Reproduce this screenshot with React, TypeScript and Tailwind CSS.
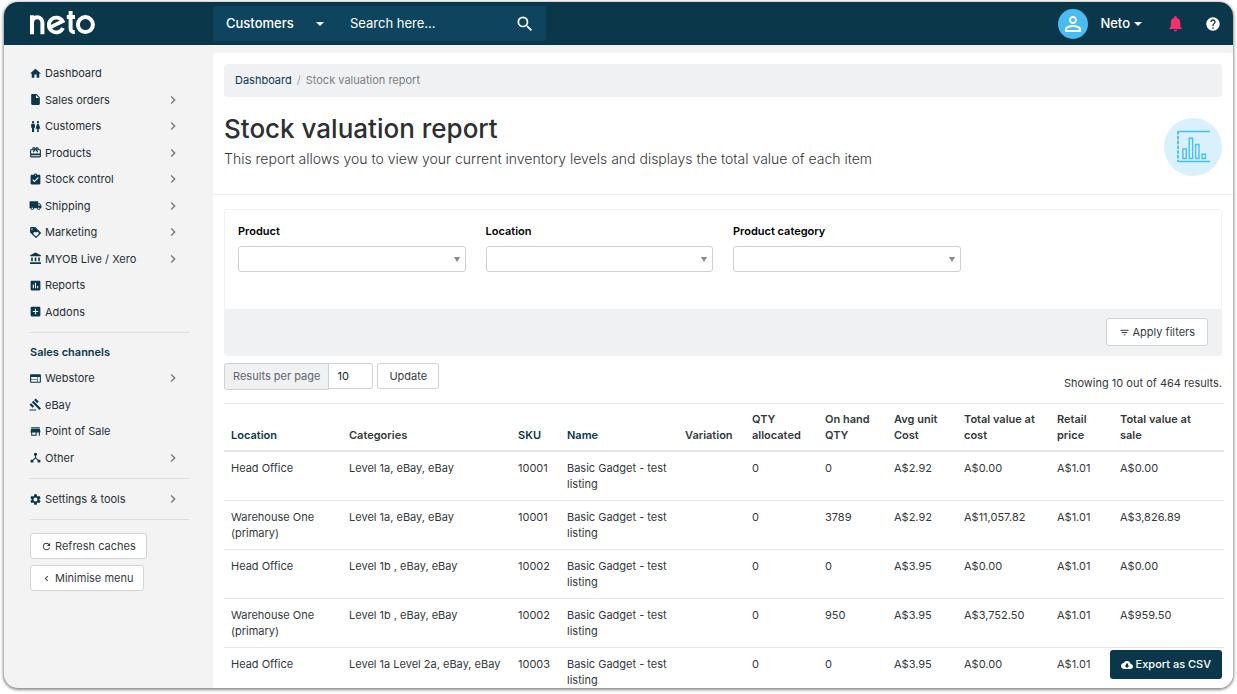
import { useState } from "react";
import type { ReactNode } from "react";
import type { IconType } from "react-icons";
import {
    MdAccountBalance,
    MdAddBox,
    MdAssessment,
    MdAssignmentTurnedIn,
    MdCardGiftcard,
    MdChevronLeft,
    MdChevronRight,
    MdCloudDownload,
    MdDeviceHub,
    MdFilterList,
    MdGavel,
    MdHelp,
    MdHome,
    MdInsertDriveFile,
    MdLocalShipping,
    MdLoyalty,
    MdNotifications,
    MdPersonOutline,
    MdRefresh,
    MdSearch,
    MdSettings,
    MdStore,
    MdWc,
    MdWeb,
} from "react-icons/md";

type NavItem = { label: string; icon: IconType; more?: boolean };

const mainNav: NavItem[] = [
    { label: "Dashboard", icon: MdHome },
    { label: "Sales orders", icon: MdInsertDriveFile, more: true },
    { label: "Customers", icon: MdWc, more: true },
    { label: "Products", icon: MdCardGiftcard, more: true },
    { label: "Stock control", icon: MdAssignmentTurnedIn, more: true },
    { label: "Shipping", icon: MdLocalShipping, more: true },
    { label: "Marketing", icon: MdLoyalty, more: true },
    { label: "MYOB Live / Xero", icon: MdAccountBalance, more: true },
    { label: "Reports", icon: MdAssessment },
    { label: "Addons", icon: MdAddBox },
];

const channelNav: NavItem[] = [
    { label: "Webstore", icon: MdWeb, more: true },
    { label: "eBay", icon: MdGavel },
    { label: "Point of Sale", icon: MdStore },
    { label: "Other", icon: MdDeviceHub, more: true },
];

const columns = [
    { label: "Location", width: "w-[118px]", sortable: true },
    { label: "Categories", width: "w-[169px]" },
    { label: "SKU", width: "w-[49px]", sortable: true },
    { label: "Name", width: "w-[118px]", sortable: true },
    { label: "Variation", width: "w-[67px]" },
    { label: "QTY allocated", width: "w-[73px]" },
    { label: "On hand QTY", width: "w-[69px]" },
    { label: "Avg unit Cost", width: "w-[70px]" },
    { label: "Total value at cost", width: "w-[93px]" },
    { label: "Retail price", width: "w-[63px]" },
    { label: "Total value at sale", width: "w-[111px]" },
];

const name = "Basic Gadget - test listing";

const rows = [
    ["Head Office", "Level 1a, eBay, eBay", "10001", name, "", "0", "0", "A$2.92", "A$0.00", "A$1.01", "A$0.00"],
    ["Warehouse One (primary)", "Level 1a, eBay, eBay", "10001", name, "", "0", "3789", "A$2.92", "A$11,057.82", "A$1.01", "A$3,826.89"],
    ["Head Office", "Level 1b , eBay, eBay", "10002", name, "", "0", "0", "A$3.95", "A$0.00", "A$1.01", "A$0.00"],
    ["Warehouse One (primary)", "Level 1b , eBay, eBay", "10002", name, "", "0", "950", "A$3.95", "A$3,752.50", "A$1.01", "A$959.50"],
    ["Head Office", "Level 1a Level 2a, eBay, eBay", "10003", name, "", "0", "0", "A$3.95", "A$0.00", "A$1.01", ""],
];

function NavLink({ item }: { item: NavItem }) {
    const Icon = item.icon;
    return (
        <a href="#" className="flex items-center gap-[3px] pr-2 text-[#1f2f38]">
            <Icon className="size-[13px] -ml-px text-[#0b374b]" />
            <span className="flex-1">{item.label}</span>
            {item.more && <MdChevronRight className="size-4 text-[#777]" />}
        </a>
    );
}

function OutlineButton({ className, children }: { className: string; children: ReactNode }) {
    return (
        <button className={`flex items-center rounded-[3px] border border-[#d2d3d4] bg-white text-[#343a40] ${className}`}>
            {children}
        </button>
    );
}

function Logo() {
    return (
        <svg viewBox="0 0 66 26" className="h-[26px] w-[66px]" fill="none" stroke="#fff" strokeWidth="4">
            <path d="M3 23.2V4.2M3 12a5.2 5.8 0 0 1 10.4 0V23.2" />
            <path d="M20.6 16.6 33.6 10.2A7.4 7.4 0 1 0 34 17" strokeWidth="3.8" />
            <path d="M41.6 0V17.5c0 2.6 1.4 3.8 4.2 3.6M37.8 6H46" />
            <circle cx="56.4" cy="13.6" r="7.5" />
        </svg>
    );
}

function TopBar() {
    return (
        <header className="flex h-[43px] shrink-0 items-center bg-[#0b374b] text-[13px] font-medium text-white">
            <a href="#" aria-label="neto" className="w-[209px] pl-[25px]">
                <Logo />
            </a>
            <form className="flex h-[35px] w-[333px] items-center rounded-[3px] bg-[#0f445e] pr-[11px]">
                <button type="button" className="flex w-[137px] items-center gap-[22px] pl-[13px]">
                    Customers
                    <span className="border-x-4 border-t-4 border-x-transparent border-t-white" />
                </button>
                <input
                    aria-label="Search"
                    placeholder="Search here..."
                    className="min-w-0 flex-1 font-normal outline-none placeholder:text-white"
                />
                <button type="button" aria-label="Search">
                    <MdSearch className="size-5" />
                </button>
            </form>
            <div className="ml-auto flex items-center pr-3">
                <span className="mr-3 flex size-[30px] items-center justify-center rounded-full bg-[#49bdf2]">
                    <MdPersonOutline className="size-6" />
                </span>
                <button className="mr-6 flex items-center gap-1">
                    Neto
                    <span className="border-x-4 border-t-4 border-x-transparent border-t-white" />
                </button>
                <button aria-label="Notifications" className="mr-5">
                    <MdNotifications className="size-[19px] text-[#fb2d6e]" />
                </button>
                <button aria-label="Help">
                    <MdHelp className="size-4" />
                </button>
            </div>
        </header>
    );
}

function Sidebar() {
    return (
        <aside className="w-[209px] shrink-0 pt-[15px] pl-[26px] pr-6 text-[11px]">
            <nav className="grid h-[265px] auto-rows-fr">
                {mainNav.map((item) => (
                    <NavLink key={item.label} item={item} />
                ))}
            </nav>
            <hr className="mt-[7px] border-[#dcdddd]" />
            <h2 className="mt-[11px] mb-[5px] leading-4 font-semibold text-[#0b374b]">Sales channels</h2>
            <nav className="grid h-[106px] auto-rows-fr">
                {channelNav.map((item) => (
                    <NavLink key={item.label} item={item} />
                ))}
            </nav>
            <hr className="my-[7px] border-[#dcdddd]" />
            <nav className="grid h-[26px]">
                <NavLink item={{ label: "Settings & tools", icon: MdSettings, more: true }} />
            </nav>
            <hr className="mt-[7px] mb-[13px] border-[#dcdddd]" />
            <div className="flex flex-col items-start gap-1.5">
                <OutlineButton className="h-[26px] gap-[3px] px-[10px]">
                    <MdRefresh className="size-[11px]" />
                    Refresh caches
                </OutlineButton>
                <OutlineButton className="h-[26px] gap-[3px] px-[10px]">
                    <MdChevronLeft className="size-[11px]" />
                    Minimise menu
                </OutlineButton>
            </div>
        </aside>
    );
}

function ReportBadge() {
    return (
        <span className="flex size-[58px] items-center justify-center rounded-full bg-[#d9f1fc]">
            <svg viewBox="0 0 34 34" className="size-[34px]" fill="none" stroke="#46c0ee">
                <path d="M3 1.5H34M3 31.5H34" strokeWidth="1.4" />
                <path d="M2 1V32" strokeWidth="1.8" strokeDasharray="3.6 1.2" />
                <path d="M6.9 19h3.4v9.5H6.9zM13.2 8.3h3.4v20.2h-3.4zM19.6 14.5h3.4v14h-3.4zM26 24.3h3.4v4.2H26z" strokeWidth="1.4" />
            </svg>
        </span>
    );
}

function FilterSelect({ id, label }: { id: string; label: string }) {
    return (
        <div>
            <label htmlFor={id} className="block leading-4 font-semibold text-black">{label}</label>
            <div className="relative mt-[7px]">
                <select id={id} className="block h-[26px] w-full appearance-none rounded-[3px] border border-[#cfd0d1] bg-white px-2" />
                <span className="pointer-events-none absolute top-[11px] right-1.5 border-x-3 border-t-5 border-x-transparent border-t-[#888]" />
            </div>
        </div>
    );
}

function StockTable() {
    return (
        <table className="mt-3 w-full table-fixed border-collapse text-left leading-4 text-[#33383c]">
            <thead className="border-t border-b-2 border-[#e4e5e6] align-bottom">
            <tr>
                {columns.map((col) => (
                    <th key={col.label} className={`py-[7px] pl-[7px] font-semibold last:pr-4 ${col.width} ${col.sortable ? "text-[#0b374b]" : ""}`}>
                        {col.label}
                    </th>
                ))}
            </tr>
            </thead>
            <tbody className="divide-y divide-[#e6e7e8] align-top">
            {rows.map((row, i) => (
                <tr key={i}>
                    {row.map((cell, j) => (
                        <td key={columns[j].label} className="py-2 pl-[7px]">{cell}</td>
                    ))}
                </tr>
            ))}
            </tbody>
        </table>
    );
}

function App() {
    const [perPage, setPerPage] = useState("10");

    return (
        <div className="h-screen bg-white px-1 pt-0.5 pb-1.5 font-['Inter',sans-serif]">
            <div className="relative flex h-full flex-col overflow-hidden rounded-[14px] bg-[#f3f3f3] shadow-[0_1px_3px_1px_rgba(0,0,0,0.45)]">
                <TopBar />
                <div className="flex min-h-0 flex-1">
                    <Sidebar />
                    <main className="mt-2 min-w-0 flex-1 overflow-hidden rounded-t-[4px] bg-white text-[11px]">
                        <div className="border-b border-[#f0f0f0] px-[11px] pt-[11px] pb-[18px]">
                            <nav className="flex h-[33px] items-center rounded-[3px] bg-[#f0f1f3] px-[11px] text-[#7b8085]">
                                <a href="#" className="text-[#0b374b]">Dashboard</a>
                                <span className="px-[5px] text-[#a5a9ad]">/</span>
                                Stock valuation report
                            </nav>
                            <div className="mt-[14px] flex items-start justify-between">
                                <div>
                                    <h1 className="mt-0.5 text-[26px] leading-8 font-medium text-[#2b2f31]">
                                        Stock valuation report
                                    </h1>
                                    <p className="mt-1 text-[14px] leading-5 font-light text-[#33383c]">
                                        This report allows you to view your current inventory levels and displays the total value of each item
                                    </p>
                                </div>
                                <div className="mt-[7px]">
                                    <ReportBadge />
                                </div>
                            </div>
                        </div>

                        <div className="px-[11px] pt-[14px]">
                            <section className="overflow-hidden rounded-[3px] border border-[#f0f1f3]">
                                <div className="grid h-[99px] grid-cols-4 gap-5 px-[13px] pt-[13px]">
                                    <FilterSelect id="product" label="Product" />
                                    <FilterSelect id="location" label="Location" />
                                    <FilterSelect id="category" label="Product category" />
                                </div>
                                <div className="flex h-[46px] items-center justify-end bg-[#f0f1f3] px-[13px]">
                                    <OutlineButton className="h-7 gap-[3px] px-3">
                                        <MdFilterList className="size-[11px]" />
                                        Apply filters
                                    </OutlineButton>
                                </div>
                            </section>

                            <div className="mt-[7px] flex items-start">
                                <label
                                    htmlFor="per-page"
                                    className="flex h-[27px] items-center rounded-l-[3px] border border-[#cfd0d1] bg-[#f0f1f3] px-2 text-[#5f656a]"
                                >
                                    Results per page
                                </label>
                                <input
                                    id="per-page"
                                    value={perPage}
                                    onChange={(e) => setPerPage(e.target.value)}
                                    className="h-[26px] w-11 rounded-r-[3px] border border-l-0 border-[#cfd0d1] bg-white px-2 text-[#1d2124] outline-none"
                                />
                                <OutlineButton className="ml-1 h-[26px] px-[11px]">Update</OutlineButton>
                                <p className="mt-3 ml-auto leading-4 text-[#33383c]">Showing 10 out of 464 results.</p>
                            </div>

                            <StockTable />
                        </div>
                    </main>
                </div>
                <button className="absolute right-[11px] bottom-[9px] flex h-[29px] items-center gap-[3px] rounded-[3px] bg-[#0b374b] px-[11px] text-[11px] font-medium text-white">
                    <MdCloudDownload className="size-3" />
                    Export as CSV
                </button>
            </div>
        </div>
    );
}

export default App;
